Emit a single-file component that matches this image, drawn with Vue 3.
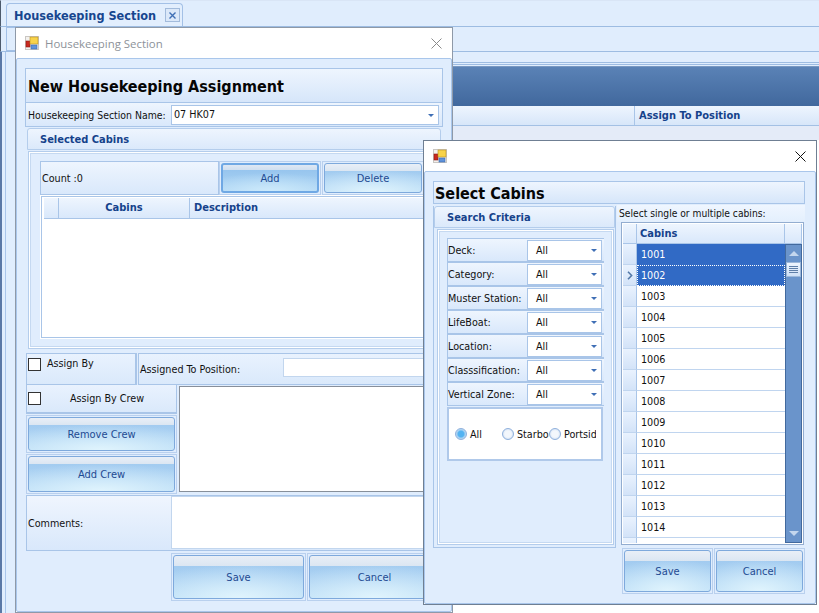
<script setup>
const criteria = ['Deck:', 'Category:', 'Muster Station:', 'LifeBoat:', 'Location:', 'Classsification:', 'Vertical Zone:']
const cabins = [1001, 1002, 1003, 1004, 1005, 1006, 1007, 1008, 1009, 1010, 1011, 1012, 1013, 1014]
const radios = [
  { label: 'All', on: true },
  { label: 'Starboard', on: false },
  { label: 'Portside', on: false }
]
</script>

<template>
  <div class="screen">
    <!-- background application -->
    <div class="tabbar">
      <div class="tab">
        <span class="tab-title">Housekeeping Section</span>
        <span class="tab-close">
          <svg width="9" height="9" viewBox="0 0 9 9"><path d="M1.5 1.5l6 6M7.5 1.5l-6 6" stroke="#3f6fb5" stroke-width="1.4" fill="none"/></svg>
        </span>
      </div>
    </div>
    <div class="subbar"><div class="subtab"></div></div>
    <div class="lower">
      <div class="rail"></div>
      <div class="content">
        <div class="doublelines"></div>
        <div class="band"></div>
        <div class="bg-head"><span>Assign To Position</span></div>
        <div class="bg-fill"></div>
      </div>
    </div>

    <!-- window 1 -->
    <section class="win win-a">
      <header class="titlebar">
        <svg class="appicon" width="14" height="14" viewBox="0 0 14 14">
          <rect x="0.5" y="0.5" width="13" height="13" fill="#f3f1ee" stroke="#c9c6c2"/>
          <rect x="1" y="5" width="4" height="6" fill="#c8281e" stroke="#8e1a14" stroke-width=".6"/>
          <rect x="5" y="1" width="8" height="7" fill="#f8d34a" stroke="#b98f24" stroke-width=".6"/>
          <rect x="6" y="9" width="6" height="4" fill="#5f92da" stroke="#3b69ad" stroke-width=".6"/>
        </svg>
        <span class="wintitle">Housekeeping Section</span>
        <svg class="closex" width="11" height="11" viewBox="0 0 11 11"><path d="M.5.5l10 10M10.5.5l-10 10" stroke="#8a8a8a" fill="none"/></svg>
      </header>
      <div class="winbody a-body">
        <div class="heading a-heading">New Housekeeping Assignment</div>
        <div class="name-row panel">
          <label>Housekeeping Section Name:</label>
          <div class="combo name-combo"><span>07 HK07</span><i class="arrow"></i></div>
        </div>
        <div class="group a-group">
          <div class="group-head">Selected Cabins</div>
          <div class="group-body a-groupbody">
            <div class="count-row">
              <div class="count panel">Count :0</div>
              <div class="btncell"><button class="btn focused">Add</button></div>
              <div class="btncell delete-cell"><button class="btn">Delete</button></div>
            </div>
            <div class="a-grid">
              <div class="a-grid-head">
                <span class="hcell corner"></span>
                <span class="hcell cabinscol">Cabins</span>
                <span class="hcell desccol">Description</span>
              </div>
            </div>
          </div>
        </div>
        <div class="assign-row">
          <div class="cell assignby"><i class="check"></i><span>Assign By</span></div>
          <div class="cell assigned">
            <label>Assigned To Position:</label>
            <div class="plain-input"></div>
          </div>
        </div>
        <div class="crew-row">
          <div class="crew-left">
            <div class="cell crewcheck"><i class="check"></i><span>Assign By Crew</span></div>
            <div class="btncell crewbtn1"><button class="btn">Remove Crew</button></div>
            <div class="btncell crewbtn2"><button class="btn">Add Crew</button></div>
          </div>
          <div class="crewlist"></div>
        </div>
        <div class="comments">
          <label>Comments:</label>
          <div class="comment-box"></div>
        </div>
        <div class="a-actions">
          <div class="btncell"><button class="btn big">Save</button></div>
          <div class="btncell"><button class="btn big">Cancel</button></div>
        </div>
      </div>
    </section>

    <!-- window 2 -->
    <section class="win win-b">
      <header class="titlebar">
        <svg class="appicon" width="14" height="14" viewBox="0 0 14 14">
          <rect x="0.5" y="0.5" width="13" height="13" fill="#f3f1ee" stroke="#c9c6c2"/>
          <rect x="1" y="5" width="4" height="6" fill="#c8281e" stroke="#8e1a14" stroke-width=".6"/>
          <rect x="5" y="1" width="8" height="7" fill="#f8d34a" stroke="#b98f24" stroke-width=".6"/>
          <rect x="6" y="9" width="6" height="4" fill="#5f92da" stroke="#3b69ad" stroke-width=".6"/>
        </svg>
        <svg class="closex" width="11" height="11" viewBox="0 0 11 11"><path d="M.5.5l10 10M10.5.5l-10 10" stroke="#111" fill="none"/></svg>
      </header>
      <div class="winbody b-body">
        <div class="heading b-heading">Select Cabins</div>
        <div class="b-columns">
          <div class="group b-group">
            <div class="group-head b-grouphead">Search Criteria</div>
            <div class="group-body b-groupbody">
              <div v-for="c in criteria" :key="c" class="crit panel">
                <label>{{ c }}</label>
                <div class="combo crit-combo"><span>All</span><i class="arrow"></i></div>
              </div>
              <div class="radios">
                <span v-for="r in radios" :key="r.label" class="radio">
                  <i class="dot" :class="{ on: r.on }"></i><span class="rlabel">{{ r.label }}</span>
                </span>
              </div>
            </div>
          </div>
          <div class="b-right">
            <div class="hint">Select single or multiple cabins:</div>
            <div class="b-grid">
              <div class="b-grid-head">
                <span class="hcell rowhead"></span>
                <span class="hcell b-cabins">Cabins</span>
                <span class="hcell b-spare"></span>
              </div>
              <div class="b-grid-main">
                <div class="b-rows">
                  <div v-for="(n, i) in cabins" :key="n" class="row" :class="{ sel: i < 2, current: i === 1 }">
                    <span class="rowhead rh">
                      <svg v-if="i === 1" width="6" height="9" viewBox="0 0 6 9"><path d="M1 .8L4.6 4.5 1 8.2" stroke="#5479a8" stroke-width="1.6" fill="none"/></svg>
                    </span>
                    <span class="val">{{ n }}</span>
                  </div>
                  <div class="row last"><span class="rowhead rh"></span><span class="val"></span></div>
                </div>
                <div class="scroll">
                  <i class="up"></i>
                  <div class="thumb"><b></b><b></b><b></b><b></b></div>
                  <i class="down"></i>
                </div>
              </div>
            </div>
            <div class="b-actions">
              <div class="btncell"><button class="btn big">Save</button></div>
              <div class="btncell"><button class="btn big">Cancel</button></div>
            </div>
          </div>
        </div>
      </div>
    </section>
  </div>
</template>

<style>
html, body { margin: 0; padding: 0; background: #fff; }
</style>

<style scoped>
* { box-sizing: border-box; }
.screen {
  position: relative;
  width: 819px;
  height: 613px;
  overflow: hidden;
  background: #fff;
  font: 10.7px "DejaVu Sans Condensed", "Liberation Sans", sans-serif;
  color: #111;
  display: flex;
  flex-direction: column;
}
label { white-space: nowrap; }

/* background application */
.tabbar {
  height: 27px;
  flex: none;
  padding: 3px 0 0 5px;
  background: #e0edfd;
  border-top: 1px solid #d9e5f6;
  border-left: 1px solid #4d5a6b;
  border-bottom: 1px solid #9dbce2;
}
.tab {
  width: 177px;
  height: 23px;
  margin-top: -1px;
  display: flex;
  align-items: center;
  justify-content: space-between;
  padding: 0 2px 0 7px;
  border: 1px solid #a3c0e6;
  border-bottom: none;
  border-radius: 4px 4px 0 0;
  background: #e2eefd;
}
.tab-title { font-size: 12.6px; font-weight: 700; color: #17468f; white-space: nowrap; }
.tab-close {
  width: 15px; height: 14px;
  display: flex; align-items: center; justify-content: center;
  border: 1px solid #a2bbdc;
  background: #dbe8f9;
}
.subbar {
  height: 25px;
  flex: none;
  padding-left: 5px;
  background: #e0edfd;
  border-left: 1px solid #4d5a6b;
  border-bottom: 1px solid #9dbce2;
}
.subtab { width: 10px; height: 24px; border: 1px solid #a3c0e6; border-right: none; }
.lower { flex: 1; display: flex; min-height: 0; }
.rail {
  width: 15px;
  flex: none;
  background: #e0edfd;
  border-left: 2px solid #5a78a6;
  box-shadow: inset 3px 0 0 #e0edfd, inset 4px 0 0 #a9c5ea;
}
.content { flex: 1; min-width: 0; }
.doublelines {
  height: 14px;
  background: #e0edfd;
  background-image: linear-gradient(#9dbce2, #9dbce2), linear-gradient(#9dbce2, #9dbce2);
  background-repeat: no-repeat;
  background-size: 100% 1px, 100% 1px;
  background-position: 0 10px, 0 12px;
}
.band {
  height: 40px;
  background: linear-gradient(#5a82b6, #41689d);
  border-top: 1px solid #7898c2;
}
.bg-head {
  height: 20px;
  padding-left: 619px;
  background: linear-gradient(#eef5fe, #d7e6f9);
  border-bottom: 1px solid #a3c0e4;
}
.bg-head span {
  display: block;
  height: 100%;
  padding-left: 4px;
  line-height: 19px;
  font-weight: 700;
  font-size: 11px;
  color: #15428b;
  border-left: 1px solid #a9c5e8;
}
.bg-fill { height: 14px; background: #e4ebf8; }

/* windows */
.win {
  position: absolute;
  display: flex;
  flex-direction: column;
  background: #fff;
  border: 1px solid #8e99a8;
}
.win-a { left: 15px; top: 27px; width: 438px; height: 586px; }
.win-b { left: 423px; top: 140px; width: 394px; height: 465px; border-color: #6f7f93; }
.titlebar {
  height: 30px;
  flex: none;
  display: flex;
  align-items: center;
  padding: 0 10px 0 9px;
}
.wintitle { margin-left: 6px; font: 11.4px "Open Sans", "Noto Sans", sans-serif; color: #8d9299; }
.closex { margin-left: auto; }
.winbody {
  flex: 1;
  min-height: 0;
  background: #e0edfd;
  border: 1px solid #a9c6eb;
  border-radius: 2px;
}
.a-body { padding: 9px 8px 0 8px; display: flex; flex-direction: column; }
.panel { background: linear-gradient(#eef5fe, #d9e8fb); }

.heading {
  font-weight: 700;
  color: #060606;
  border: 1px solid #a9c5e8;
  background: linear-gradient(#eef5fe, #d6e6fa);
  white-space: nowrap;
}
.a-heading {
  height: 35px;
  font-size: 16px;
  line-height: 35px;
  padding-left: 2px;
  flex: none;
}
.name-row {
  height: 24px;
  flex: none;
  display: flex;
  align-items: center;
  justify-content: space-between;
  padding: 0 3px 0 2px;
  border: 1px solid #a9c5e8;
  border-top: none;
}
.name-row label { font-size: 10.4px; }
.combo {
  position: relative;
  background: #fff;
  border: 1px solid #a9c5e8;
  display: flex;
  align-items: center;
}
.arrow {
  position: absolute;
  right: 4px;
  top: 50%;
  margin-top: -1px;
  width: 0; height: 0;
  border: 3px solid transparent;
  border-top: 3px solid #3f6fb5;
  border-bottom: none;
}
.name-combo { width: 268px; height: 20px; padding-left: 2px; }

.a-group { margin: 0 2px; height: 222px; flex: none; padding-top: 1px; }
.group-head {
  height: 22px;
  line-height: 21px;
  padding-left: 12px;
  font-weight: 700;
  font-size: 11px;
  color: #15428b;
  border: 1px solid #b4cdec;
  border-radius: 3px 3px 0 0;
  background: linear-gradient(#eef5fe, #dbe9fb);
}
.group-body {
  border: 1px solid #b4cdec;
  box-shadow: inset 0 0 0 1px #fff, inset 0 0 0 2px #c5d9f1;
}
.a-groupbody { height: 198px; margin: 1px 0 0 1px; padding: 9px 0 0 11px; }
.count-row { display: flex; height: 34px; }
.count {
  width: 179px;
  flex: none;
  border: 1px solid #a9c5e8;
  display: flex;
  align-items: center;
  padding-left: 1px;
}
.btncell {
  display: flex;
  padding: 1px;
  border: 1px solid #b9d0ee;
}
.count-row .btncell { width: 102px; height: 34px; flex: none; }
.count-row .delete-cell { margin-left: 1px; }
.btn {
  flex: 1;
  width: 100%;
  min-width: 0;
  padding: 0;
  font: inherit;
  font-size: 11px;
  color: #1e4a92;
  border: 1px solid #7ea9dc;
  border-radius: 3px;
  background:
    radial-gradient(ellipse 85% 80% at 50% 100%, #e0f4fd 0, rgba(224, 244, 253, 0) 100%),
    linear-gradient(#e9eff7 0, #dbe6f2 7px, #a2cbf0 7px, #b9dcf6 100%);
}
.btn.focused {
  border: 2px solid #6fa8e4;
  background:
    radial-gradient(ellipse 80% 70% at 50% 100%, #cdeafb 0, rgba(205, 234, 251, 0) 100%),
    linear-gradient(#dfe8f4 0, #cfdff0 5px, #97c5ee 5px, #afd6f4 100%);
}
.btn.big {
  background:
    radial-gradient(ellipse 85% 80% at 50% 100%, #e0f4fd 0, rgba(224, 244, 253, 0) 100%),
    linear-gradient(#e9eff7 0, #dbe6f2 10px, #a2cbf0 10px, #b9dcf6 100%);
}
.a-grid {
  width: 400px;
  height: 142px;
  margin: 1px 0 0 1px;
  padding: 1px 0 0 2px;
  background: #fff;
  border: 1px solid #a9c5e8;
  box-shadow: 0 0 0 1px #fff;
}
.a-grid-head { display: flex; height: 21px; }
.hcell {
  display: block;
  height: 100%;
  font-weight: 700;
  font-size: 11px;
  color: #15428b;
  line-height: 19px;
  background: linear-gradient(#eef5fe, #d9e8fb);
  border-right: 1px solid #a9c5e8;
  border-bottom: 1px solid #a9c5e8;
}
.corner { width: 15px; }
.cabinscol { width: 131px; text-align: center; }
.desccol { flex: 1; padding-left: 4px; }

.cell {
  background: linear-gradient(#e9f2fe, #dae9fb);
  border: 1px solid #a9c5e8;
}
.check {
  display: block;
  flex: none;
  width: 13px;
  height: 13px;
  background: #fff;
  border: 1px solid #333;
}
.assign-row {
  display: flex;
  height: 32px;
  margin: 4px 0 0 1px;
  flex: none;
}
.assignby {
  width: 111px;
  display: flex;
  gap: 6px;
  padding: 4px 0 0 1px;
  line-height: 12px;
  border-width: 1px 2px 1px 1px;
}
.assigned {
  flex: 1;
  margin-left: 1px;
  display: flex;
  align-items: center;
  padding-left: 1px;
}
.plain-input {
  width: 159px;
  height: 19px;
  margin: -3px 0 0 auto;
  background: #fff;
  border: 1px solid #c2d6ee;
}
.crew-row { display: flex; margin-left: 1px; height: 110px; flex: none; }
.crew-left { width: 151px; flex: none; display: flex; flex-direction: column; }
.crewcheck {
  height: 29px;
  flex: none;
  display: flex;
  align-items: center;
  padding-left: 1px;
  border-width: 0 1px 2px 1px;
}
.crewcheck span { margin-left: 29px; }
.crewbtn1 { height: 38px; flex: none; margin-top: 1px; }
.crewbtn2 { height: 40px; flex: none; margin-top: 1px; }
.crewlist {
  flex: 1;
  height: 106px;
  margin: 1px 0 0 2px;
  background: #fff;
  border: 1px solid #878f9a;
}
.comments {
  display: flex;
  height: 56px;
  margin-left: 1px;
  flex: none;
  background: linear-gradient(#eff5fe, #d9e8fb);
  border: 1px solid #a9c5e8;
  align-items: center;
  padding-left: 1px;
}
.comments label { width: 143px; flex: none; }
.comment-box {
  flex: 1;
  align-self: flex-start;
  height: 53px;
  background: #fff;
  border: 1px solid #c2d6ee;
}
.a-actions {
  display: flex;
  gap: 1px;
  margin: 2px 0 0 146px;
  height: 48px;
  flex: none;
}
.a-actions .btncell { width: 135px; flex: none; }

/* select cabins window */
.b-body { padding: 9px 10px 0 8px; display: flex; flex-direction: column; }
.b-heading {
  height: 23px;
  flex: none;
  font-size: 16px;
  line-height: 24px;
  padding-left: 1px;
}
.b-columns { display: flex; flex: 1; margin-top: 1px; min-height: 0; }
.b-group {
  width: 183px;
  height: 342px;
  margin-top: 1px;
  flex: none;
  border: 1px solid #a9c5e8;
  border-top: none;
}
.b-grouphead { height: 22px; }
.b-groupbody { height: 316px; margin: 1px 1px 0 3px; padding: 8px 0 0 9px; }
.crit {
  width: 157px;
  height: 24px;
  display: flex;
  align-items: center;
  justify-content: space-between;
  padding: 0 2px 0 0;
  border: 1px solid #a9c5e8;
  border-width: 1px 0 1px 1px;
}
.crit-combo { width: 75px; height: 21px; padding-left: 8px; }
.radios {
  width: 156px;
  height: 54px;
  margin-top: 1px;
  display: flex;
  align-items: center;
  padding-left: 6px;
  background: #fff;
  border: 2px solid #b0c9ea;
}
.radio { display: flex; align-items: center; width: 47px; overflow: hidden; flex: none; }
.dot {
  flex: none;
  width: 12px;
  height: 12px;
  margin-right: 3px;
  border-radius: 50%;
  border: 1px solid #8fb0dc;
  background: radial-gradient(circle, #f3f7fc 0 45%, #bcd2ee 100%);
}
.dot.on { background: radial-gradient(circle, #53b3f2 0 40%, #a9d3f3 60%, #cfe2f6 100%); }
.rlabel { white-space: nowrap; }

.b-right { flex: 1; min-width: 0; margin-left: 1px; display: flex; flex-direction: column; }
.hint {
  height: 17px;
  flex: none;
  line-height: 17px;
  padding-left: 2px;
  font-size: 10.2px;
  white-space: nowrap;
  background: linear-gradient(#eff6ff, #e3effd);
}
.b-grid {
  height: 323px;
  flex: none;
  margin-left: 4px;
  width: 183px;
  padding: 1px;
  border: 1px solid #93add0;
  box-shadow: inset 0 0 0 1px #fff;
  background: #fff;
  display: flex;
  flex-direction: column;
}
.b-grid-head { display: flex; height: 20px; flex: none; }
.rowhead { width: 14px; flex: none; }
.b-cabins { width: 148px; padding-left: 3px; }
.b-spare { flex: 1; }
.b-grid-main { display: flex; flex: 1; min-height: 0; }
.b-rows { width: 162px; flex: none; overflow: hidden; }
.row { display: flex; height: 21px; }
.rh {
  display: flex;
  align-items: center;
  justify-content: center;
  background: linear-gradient(#e9f2fe, #d3e3f8);
  border-right: 1px solid #a9c5e8;
  border-bottom: 1px solid #c0d5ef;
}
.val {
  flex: 1;
  padding-left: 4px;
  line-height: 21px;
  font-size: 10.7px;
  border-bottom: 1px solid #c0d5ef;
  background: #fff;
}
.sel .val { background: #316ac5; color: #fff; border-bottom-color: #316ac5; }
.current .val { outline: 1px dotted #fff; outline-offset: -1px; }
.scroll {
  flex: 1;
  position: relative;
  background: #6a94cb;
  border: 1px solid #42699d;
}
.up, .down {
  position: absolute;
  left: 3px;
  width: 0; height: 0;
  border-left: 5px solid transparent;
  border-right: 5px solid transparent;
}
.up { top: 6px; border-bottom: 5px solid #c3d6ee; }
.down { bottom: 6px; border-top: 5px solid #c3d6ee; }
.thumb {
  position: absolute;
  left: 0; top: 17px;
  width: 15px; height: 15px;
  display: flex;
  flex-direction: column;
  justify-content: center;
  gap: 1px;
  padding: 0 2px;
  background: linear-gradient(#eef5fe, #cfe0f6);
  border: 1px solid #9db8da;
}
.thumb b { display: block; height: 1px; background: #5f7fa8; }
.b-actions { display: flex; gap: 1px; margin: 3px 0 0 5px; height: 46px; flex: none; }
.b-actions .btncell { width: 91px; flex: none; }
</style>
